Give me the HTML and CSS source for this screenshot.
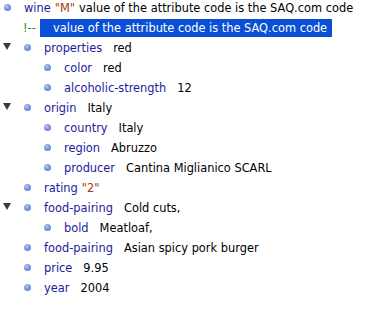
FILE: index.html
```html
<!DOCTYPE html>
<html>
<head>
<meta charset="utf-8">
<link rel="stylesheet" href="styles.css">
</head>
<body>
<div class="tree">
  <div class="row d0"><span class="bullet"></span><span class="name">wine</span><span class="attr">"M"</span><span class="val-inline">value of the attribute code is the SAQ.com code</span></div>
  <div class="row d1"><span class="twisty"></span><span class="cmark">!--</span><span class="sel">value of the attribute code is the SAQ.com code</span></div>
  <div class="row d1"><span class="twisty open"></span><span class="bullet"></span><span class="name">properties</span><span class="val">red</span></div>
  <div class="row d2"><span class="twisty"></span><span class="bullet"></span><span class="name">color</span><span class="val">red</span></div>
  <div class="row d2"><span class="twisty"></span><span class="bullet"></span><span class="name">alcoholic-strength</span><span class="val">12</span></div>
  <div class="row d1"><span class="twisty open"></span><span class="bullet"></span><span class="name">origin</span><span class="val">Italy</span></div>
  <div class="row d2"><span class="twisty"></span><span class="bullet"></span><span class="name">country</span><span class="val">Italy</span></div>
  <div class="row d2"><span class="twisty"></span><span class="bullet"></span><span class="name">region</span><span class="val">Abruzzo</span></div>
  <div class="row d2"><span class="twisty"></span><span class="bullet"></span><span class="name">producer</span><span class="val">Cantina Miglianico SCARL</span></div>
  <div class="row d1"><span class="twisty"></span><span class="bullet"></span><span class="name">rating</span><span class="attr">"2"</span></div>
  <div class="row d1"><span class="twisty open"></span><span class="bullet"></span><span class="name">food-pairing</span><span class="val">Cold cuts,</span></div>
  <div class="row d2"><span class="twisty"></span><span class="bullet"></span><span class="name">bold</span><span class="val">Meatloaf,</span></div>
  <div class="row d1"><span class="twisty"></span><span class="bullet"></span><span class="name">food-pairing</span><span class="val">Asian spicy pork burger</span></div>
  <div class="row d1"><span class="twisty"></span><span class="bullet"></span><span class="name">price</span><span class="val">9.95</span></div>
  <div class="row d1"><span class="twisty"></span><span class="bullet"></span><span class="name">year</span><span class="val">2004</span></div>
</div>
</body>
</html>
```
FILE: styles.css
```css
html, body {
  margin: 0;
  padding: 0;
  background: #ffffff;
}
body {
  font-family: "DejaVu Sans", sans-serif;
  font-size: 11.4px;
  color: #000000;
  width: 375px;
  height: 310px;
  overflow: hidden;
}
.tree {
  display: flex;
  flex-direction: column;
}
.row {
  display: flex;
  align-items: flex-start;
  height: 20px;
  line-height: 16px;
  white-space: pre;
}
.d2 { padding-left: 20px; }
.twisty {
  flex: none;
  width: 20px;
  height: 16px;
  position: relative;
}
.twisty.open::before {
  content: "";
  position: absolute;
  left: 3px;
  top: 3px;
  border-left: 4px solid transparent;
  border-right: 4px solid transparent;
  border-top: 7px solid #3a3a3a;
}
.bullet {
  flex: none;
  width: 7px;
  height: 7px;
  margin: 4px 13px 0 4px;
  border-radius: 50%;
  background: radial-gradient(circle at 40% 35%, #b8c8f2 0%, #7c97e0 45%, #4d6fcf 100%);
}
.name { color: #1c1c9c; }
.attr { color: #a23a0e; margin-left: 4px; }
.val-inline { margin-left: 4px; }
.val { margin-left: 11px; }
.cmark {
  flex: none;
  width: 20px;
  color: #2e8a1c;
  padding-left: 3px;
  box-sizing: border-box;
}
.sel {
  background: #0a4fd6;
  color: #ffffff;
  margin-top: -1px;
  padding: 1px 5px 1px 13px;
}
```
